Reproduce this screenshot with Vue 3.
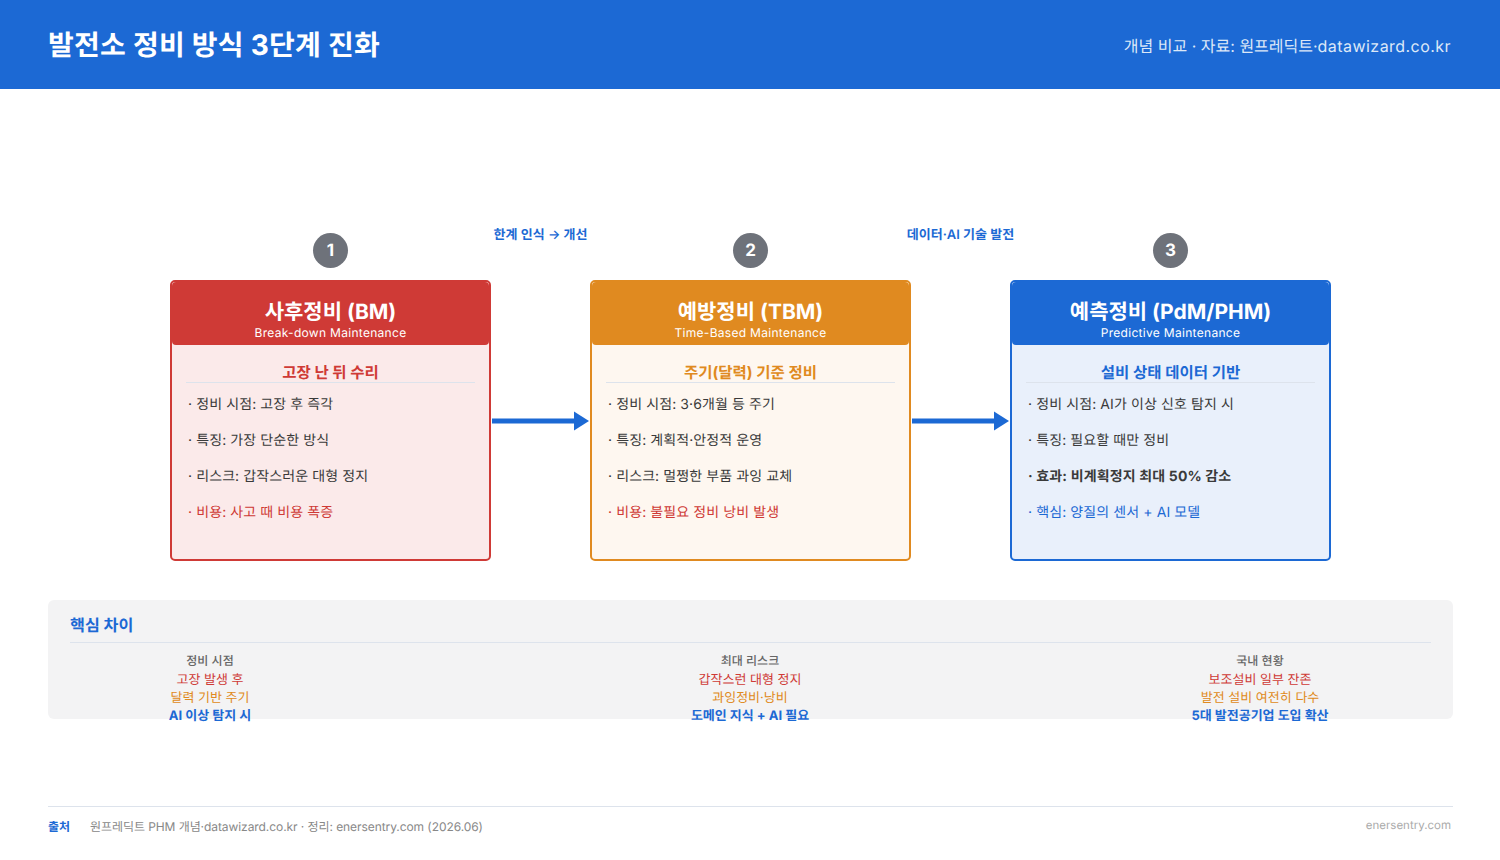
<script setup>
const cards = [
  { n: 1, cls: 'red', title: '사후정비 (BM)', sub: 'Break-down Maintenance', head: '고장 난 뒤 수리',
    items: [
      { t: '· 정비 시점: 고장 후 즉각' }, { t: '· 특징: 가장 단순한 방식' },
      { t: '· 리스크: 갑작스러운 대형 정지' }, { t: '· 비용: 사고 때 비용 폭증', c: 'warn' } ] },
  { n: 2, cls: 'orange', title: '예방정비 (TBM)', sub: 'Time-Based Maintenance', head: '주기(달력) 기준 정비',
    items: [
      { t: '· 정비 시점: 3·6개월 등 주기' }, { t: '· 특징: 계획적·안정적 운영' },
      { t: '· 리스크: 멀쩡한 부품 과잉 교체' }, { t: '· 비용: 불필요 정비 낭비 발생', c: 'warn' } ] },
  { n: 3, cls: 'blue', title: '예측정비 (PdM/PHM)', sub: 'Predictive Maintenance', head: '설비 상태 데이터 기반',
    items: [
      { t: '· 정비 시점: AI가 이상 신호 탐지 시' }, { t: '· 특징: 필요할 때만 정비' },
      { t: '· 효과: 비계획정지 최대 50% 감소', c: 'strong' }, { t: '· 핵심: 양질의 센서 + AI 모델', c: 'info' } ] },
]
const links = ['한계 인식 → 개선', '데이터·AI 기술 발전']
const cols = [
  { h: '정비 시점', r: '고장 발생 후', o: '달력 기반 주기', b: 'AI 이상 탐지 시' },
  { h: '최대 리스크', r: '갑작스런 대형 정지', o: '과잉정비·낭비', b: '도메인 지식 + AI 필요' },
  { h: '국내 현황', r: '보조설비 일부 잔존', o: '발전 설비 여전히 다수', b: '5대 발전공기업 도입 확산' },
]
</script>

<template>
  <div class="page">
    <header class="top">
      <h1>발전소 정비 방식 3단계 진화</h1>
      <span class="meta">개념 비교 · 자료: 원프레딕트·<span class="meta-url">datawizard.co.kr</span></span>
    </header>

    <main class="main">
      <div class="flow">
        <template v-for="(c, i) in cards" :key="c.n">
          <section class="step" :class="c.cls">
            <div class="badge">{{ c.n }}</div>
            <article class="card">
              <div class="card-head">
                <h2>{{ c.title }}</h2>
                <p>{{ c.sub }}</p>
              </div>
              <div class="card-body">
                <h3>{{ c.head }}</h3>
                <ul>
                  <li v-for="it in c.items" :key="it.t" :class="it.c">{{ it.t }}</li>
                </ul>
              </div>
            </article>
          </section>
          <div v-if="i < 2" class="link">
            <span class="link-label">{{ links[i] }}</span>
            <div class="link-arrow">
              <svg width="97" height="20" viewBox="0 0 97 20">
                <rect x="0" y="7.5" width="83" height="5" fill="#1c69d4" />
                <path d="M82 0.5 L97 10 L82 19.5 Z" fill="#1c69d4" />
              </svg>
            </div>
          </div>
        </template>
      </div>

      <section class="diff">
        <h4>핵심 차이</h4>
        <div class="diff-cols">
          <div v-for="c in cols" :key="c.h" class="diff-col">
            <div class="d-h">{{ c.h }}</div>
            <div class="d-r">{{ c.r }}</div>
            <div class="d-o">{{ c.o }}</div>
            <div class="d-b">{{ c.b }}</div>
          </div>
        </div>
      </section>
    </main>

    <footer class="foot">
      <strong>출처</strong>
      <span class="src">원프레딕트 PHM 개념·datawizard.co.kr · 정리: enersentry.com (2026.06)</span>
      <span class="site">enersentry.com</span>
    </footer>
  </div>
</template>

<style>
html, body { margin: 0; background: #fff; }
</style>

<style scoped>
.page {
  width: 1500px;
  height: 860px;
  display: flex;
  flex-direction: column;
  overflow: hidden;
  font-family: Inter, "Noto Sans CJK KR", sans-serif;
  text-rendering: geometricPrecision;
  color: #3a3a3a;
}
.top {
  height: 89px;
  flex: none;
  box-sizing: border-box;
  padding: 0 49px 0 48px;
  background: #1c69d4;
  display: flex;
  align-items: center;
  justify-content: space-between;
  color: #fff;
}
.top h1 { margin: -2px 0 0; font-size: 28px; font-weight: 700; letter-spacing: 0.25px; }
.meta { font-size: 16px; color: #dce8f8; }
.meta-url { letter-spacing: 0.45px; }
.main { flex: 1; padding: 137px 47px 0 48px; }
.flow { display: flex; justify-content: center; height: 335px; }
.step { width: 321px; display: flex; flex-direction: column; align-items: center; }
.badge {
  width: 35px;
  height: 35px;
  margin: 7px 0 12px;
  border-radius: 50%;
  background: #6e727a;
  color: #fff;
  font-size: 17px;
  font-weight: 700;
  display: flex;
  align-items: center;
  justify-content: center;
}
.card {
  width: 100%;
  height: 281px;
  box-sizing: border-box;
  border: 2px solid var(--c);
  border-radius: 5px;
  background: var(--t);
  display: flex;
  flex-direction: column;
}
.red { --c: #cf3a36; --t: #fbeaea; }
.orange { --c: #e08a20; --t: #fef7f0; }
.blue { --c: #1c69d4; --t: #e9f0fb; }
.card-head {
  height: 63px;
  background: var(--c);
  border-radius: 4px;
  color: #fff;
  text-align: center;
  padding-top: 17px;
  box-sizing: border-box;
}
.card-head h2 { margin: 0; font-size: 21px; line-height: 27px; font-weight: 700; }
.card-head p { margin: -1px 0 0; font-size: 12px; line-height: 16px; letter-spacing: 0.3px; color: #fff; }
.card-body { padding: 18px 14px 0; }
.card-body h3 {
  margin: 0;
  box-sizing: border-box;
  height: 20px;
  font-size: 15.5px;
  line-height: 20px;
  font-weight: 700;
  text-align: center;
  color: var(--c);
  border-bottom: 1px solid #dde3ec;
}
.card-body ul { margin: 4px 0 0; padding: 0 2px; list-style: none; }
.card-body li { height: 36px; line-height: 36px; font-size: 14px; white-space: nowrap; letter-spacing: 0.1px; }
.card-body li.warn { color: #cf3a36; }
.card-body li.info { color: #1c69d4; }
.card-body li.strong { font-weight: 700; letter-spacing: 0.15px; }
.link { width: 99px; display: grid; grid-template-columns: 99px; grid-template-rows: 54px 281px; justify-items: center; }
.link-label {
  font-size: 13px;
  line-height: 16px;
  margin-top: 1px;
  font-weight: 600;
  color: #1c69d4;
  white-space: nowrap;
}
.link-arrow { width: 97px; display: flex; align-items: center; }
.link-arrow svg { display: block; }
.diff {
  margin-top: 39px;
  height: 119px;
  box-sizing: border-box;
  padding: 14px 22px 0;
  background: #f3f3f4;
  border-radius: 6px;
}
.diff h4 {
  margin: 0;
  font-size: 16.2px;
  line-height: 22px;
  padding-bottom: 6px;
  font-weight: 700;
  color: #1c69d4;
  border-bottom: 1px solid #dde3ec;
}
.diff-cols { display: flex; padding-top: 9px; }
.diff-col { flex: none; text-align: center; font-size: 13px; line-height: 18px; }
.diff-col:nth-child(1) { width: 280px; }
.diff-col:nth-child(2) { width: 440px; margin-left: 180px; }
.diff-col:nth-child(3) { width: 342px; margin-left: auto; }
.d-h { color: #666; font-weight: 500; font-size: 12px; margin-bottom: 1px; }
.d-r { color: #cf3a36; }
.d-o { color: #e08a20; }
.d-b { color: #1c69d4; font-weight: 700; }
.foot {
  flex: none;
  height: 54px;
  box-sizing: border-box;
  padding-top: 11px;
  margin: 0 47px 0 48px;
  border-top: 1px solid #dde3ec;
  display: flex;
  align-items: flex-start;
  font-size: 12px;
  color: #888;
}
.foot strong { color: #1c69d4; font-weight: 700; width: 42px; }
.src { letter-spacing: -0.07px; }
.site { margin-left: auto; margin-right: 2px; font-size: 11.5px; color: #aaa; }
</style>
